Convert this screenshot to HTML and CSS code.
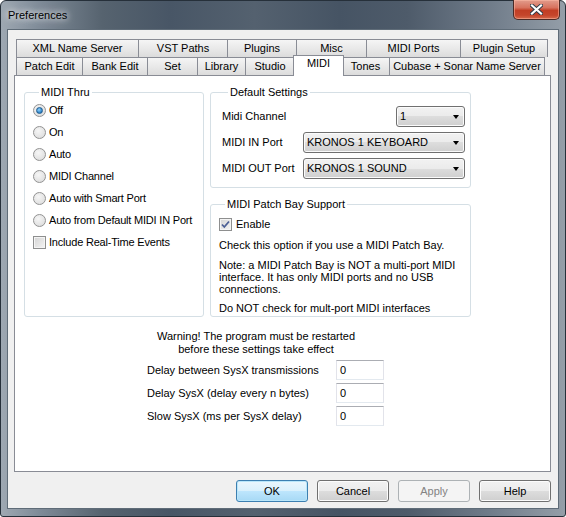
FILE: index.html
```html
<!DOCTYPE html>
<html lang="en">
<head>
    <meta charset="UTF-8">
    <meta name="viewport" content="width=device-width, initial-scale=1.0">
    <title>Preferences</title>
    <link rel="stylesheet" href="styles.css">
</head>
<body>
    <div class="window">
        <div class="titlebar">
            <span class="title">Preferences</span>
            <button class="close-btn">
                <svg width="13" height="11" viewBox="0 0 13 11">
                    <path d="M2 1.5 L11 9.5 M11 1.5 L2 9.5" stroke="#2d3a46" stroke-width="4" stroke-linecap="square"/>
                    <path d="M2 1.5 L11 9.5 M11 1.5 L2 9.5" stroke="#ffffff" stroke-width="2.2" stroke-linecap="square"/>
                </svg>
            </button>
        </div>

        <div class="client">
            <div class="tabs">
                <div class="tab-row row-top">
                    <div class="tab">XML Name Server</div>
                    <div class="tab">VST Paths</div>
                    <div class="tab">Plugins</div>
                    <div class="tab">Misc</div>
                    <div class="tab">MIDI Ports</div>
                    <div class="tab">Plugin Setup</div>
                </div>
                <div class="tab-row row-bottom">
                    <div class="tab">Patch Edit</div>
                    <div class="tab">Bank Edit</div>
                    <div class="tab">Set</div>
                    <div class="tab">Library</div>
                    <div class="tab">Studio</div>
                    <div class="tab active">MIDI</div>
                    <div class="tab">Tones</div>
                    <div class="tab">Cubase + Sonar Name Server</div>
                </div>
            </div>

            <div class="page">
                <div class="groups">
                    <fieldset class="group thru">
                        <legend>MIDI Thru</legend>
                        <div class="option"><span class="radio on"></span>Off</div>
                        <div class="option"><span class="radio"></span>On</div>
                        <div class="option"><span class="radio"></span>Auto</div>
                        <div class="option"><span class="radio"></span>MIDI Channel</div>
                        <div class="option"><span class="radio"></span>Auto with Smart Port</div>
                        <div class="option"><span class="radio"></span>Auto from Default MIDI IN Port</div>
                        <div class="option"><span class="check"></span>Include Real-Time Events</div>
                    </fieldset>

                    <div class="right-col">
                        <fieldset class="group defaults">
                            <legend>Default Settings</legend>
                            <div class="setting">
                                <span>Midi Channel</span>
                                <div class="combo small"><span>1</span><i class="arrow"></i></div>
                            </div>
                            <div class="setting">
                                <span>MIDI IN Port</span>
                                <div class="combo"><span>KRONOS 1 KEYBOARD</span><i class="arrow"></i></div>
                            </div>
                            <div class="setting">
                                <span>MIDI OUT Port</span>
                                <div class="combo"><span>KRONOS 1 SOUND</span><i class="arrow"></i></div>
                            </div>
                        </fieldset>

                        <fieldset class="group patchbay">
                            <legend>MIDI Patch Bay Support</legend>
                            <div class="check-row">
                                <span class="check">
                                    <svg width="11" height="11" viewBox="0 0 11 11">
                                        <path d="M2 5.5 L4.3 8 L9 2.5" fill="none" stroke="#4b5f95" stroke-width="1.8"/>
                                    </svg>
                                </span>Enable
                            </div>
                            <p class="hint">Check this option if you use a MIDI Patch Bay.</p>
                            <p class="note">Note: a MIDI Patch Bay is NOT a multi-port MIDI<br>interface. It has only MIDI ports and no USB<br>connections.</p>
                            <p class="hint last">Do NOT check for mult-port MIDI interfaces</p>
                        </fieldset>
                    </div>
                </div>

                <div class="sysx">
                    <p class="warning">Warning! The program must be restarted<br>before these settings take effect</p>
                    <div class="field-row">
                        <span>Delay between SysX transmissions</span>
                        <span class="textbox">0</span>
                    </div>
                    <div class="field-row">
                        <span>Delay SysX (delay every n bytes)</span>
                        <span class="textbox">0</span>
                    </div>
                    <div class="field-row">
                        <span>Slow SysX (ms per SysX delay)</span>
                        <span class="textbox">0</span>
                    </div>
                </div>
            </div>

            <div class="buttons">
                <button class="btn default">OK</button>
                <button class="btn">Cancel</button>
                <button class="btn" disabled>Apply</button>
                <button class="btn">Help</button>
            </div>
        </div>
    </div>
</body>
</html>
```

FILE: styles.css
```css
body {
    margin: 0;
    font-family: "Liberation Sans", Arial, sans-serif;
    font-size: 11px;
    line-height: 13px;
    color: #000000;
    overflow: hidden;
}

.window {
    width: 566px;
    height: 517px;
    box-sizing: border-box;
    border: 1px solid #26303a;
    border-radius: 6px 6px 3px 3px;
    background: linear-gradient(to right, #9ea8b2 0%, #7e8a97 7%, #56636f 18%, #485666 30%, #54616f 45%, #465464 60%, #4e5b6a 72%, #6e7a88 86%, #949ea8 100%);
    display: flex;
    flex-direction: column;
}

.titlebar {
    height: 28px;
    display: flex;
    align-items: center;
    justify-content: space-between;
    padding: 0 5px 0 7px;
    flex-shrink: 0;
}

.title {
    color: #000000;
    text-shadow: 0 0 6px #ffffff, 0 0 10px rgba(255, 255, 255, 0.8);
}

.close-btn {
    align-self: flex-start;
    margin-top: -1px;
    width: 47px;
    height: 20px;
    padding: 0;
    border: 1px solid #4a2a26;
    border-top: none;
    border-radius: 0 0 5px 5px;
    background: linear-gradient(#e29c8c 0%, #d7735f 40%, #c13e25 55%, #c5452b 80%, #d46a4c 100%);
    box-shadow: inset 0 0 0 1px rgba(255, 190, 170, 0.5);
    display: flex;
    justify-content: center;
    align-items: center;
}

.client {
    flex: 1;
    margin: 0 6px 7px 6px;
    border: 1px solid #5f6c78;
    background-color: #f0f0f0;
    display: flex;
    flex-direction: column;
    padding: 9px 7px 6px 6px;
    min-height: 0;
}

/* tab strip */

.tabs {
    padding-left: 2px;
}

.tab-row {
    display: grid;
    height: 18px;
}

.row-top {
    grid-template-columns: 123px 89px 69px 70px 94px 87px;
}

.row-bottom {
    grid-template-columns: 67px 65px 50px 48px 49px 47px 48px 155px;
}

.tab {
    border: 1px solid #898c95;
    border-bottom: none;
    border-left-width: 0;
    background: linear-gradient(#f5f5f5, #e9e9e9 50%, #dcdcdc);
    display: flex;
    align-items: center;
    justify-content: center;
    white-space: nowrap;
}

.tab:first-child {
    border-left-width: 1px;
}

.tab.active {
    position: relative;
    z-index: 2;
    margin: -2px -2px -1px -2px;
    border-left-width: 1px;
    background: #ffffff;
    align-items: flex-start;
    padding-top: 1px;
}

.page {
    flex: 1;
    border: 1px solid #898c95;
    background-color: #ffffff;
    margin-bottom: 8px;
    padding: 10px 0 0 9px;
}

.groups {
    display: grid;
    grid-template-columns: 180px 261px;
    column-gap: 6px;
}

.right-col {
    display: flex;
    flex-direction: column;
    gap: 10px;
}

.group {
    margin: 0;
    padding: 0;
    border: 1px solid #d5dfe5;
    border-radius: 3px;
    min-inline-size: 0;
}

.group legend {
    margin-left: 6px;
    padding: 0 2px;
    line-height: 13px;
}

/* MIDI Thru */

.thru {
    padding: 0 8px;
}

.option {
    height: 22px;
    display: flex;
    align-items: center;
    gap: 3px;
    white-space: nowrap;
    letter-spacing: -0.2px;
}

.radio {
    width: 13px;
    height: 13px;
    box-sizing: border-box;
    border: 1px solid #929292;
    border-radius: 50%;
    background: radial-gradient(circle at 40% 35%, #f6f6f6, #d8d8d8);
    display: flex;
    justify-content: center;
    align-items: center;
    flex-shrink: 0;
}

.radio.on::after {
    content: "";
    width: 5px;
    height: 5px;
    border-radius: 50%;
    border: 1px solid #1f5b8e;
    background: radial-gradient(circle at 40% 35%, #8fd3ff, #2a7fc4 70%);
}

.check {
    width: 13px;
    height: 13px;
    box-sizing: border-box;
    border: 1px solid #8e8f8f;
    background: linear-gradient(135deg, #d4d4d4, #f4f4f4);
    box-shadow: inset 0 0 0 1px #f4f4f4;
    display: flex;
    justify-content: center;
    align-items: center;
    flex-shrink: 0;
}

/* Default Settings */

.defaults {
    padding: 7px 5px 8px 11px;
}

.setting {
    height: 21px;
    display: flex;
    align-items: center;
    justify-content: space-between;
}

.setting + .setting {
    margin-top: 5px;
}

.combo {
    width: 162px;
    height: 21px;
    box-sizing: border-box;
    border: 1px solid #707070;
    border-radius: 3px;
    background: linear-gradient(#f2f2f2 0%, #ebebeb 50%, #dddddd 50%, #cfcfcf 100%);
    box-shadow: inset 0 0 0 1px #fbfbfb;
    display: flex;
    align-items: center;
    justify-content: space-between;
    padding: 0 5px 0 3px;
}

.combo.small {
    width: 69px;
}

.arrow {
    width: 0;
    height: 0;
    border-left: 3.5px solid transparent;
    border-right: 3.5px solid transparent;
    border-top: 4px solid #000000;
}

/* MIDI Patch Bay */

.patchbay {
    padding: 4px 6px 1px 8px;
}

.check-row {
    height: 18px;
    display: flex;
    align-items: center;
    gap: 4px;
}

.patchbay p {
    margin: 0;
}

.patchbay .hint {
    margin-top: 6px;
}

.patchbay .note {
    margin-top: 7px;
    line-height: 12px;
}

.patchbay .hint.last {
    margin-top: 7px;
}

/* SysX timing */

.sysx {
    width: 237px;
    margin: 13px 0 0 123px;
}

.warning {
    margin: 0 0 4px 0;
    padding-right: 19px;
    text-align: center;
}

.field-row {
    height: 20px;
    display: flex;
    align-items: center;
    justify-content: space-between;
}

.field-row + .field-row {
    margin-top: 3px;
}

.textbox {
    width: 48px;
    height: 20px;
    box-sizing: border-box;
    border: 1px solid #e2e3ea;
    border-top-color: #abadb3;
    border-bottom-color: #e3e9ef;
    background: #ffffff;
    padding-left: 3px;
    display: flex;
    align-items: center;
}

/* dialog buttons */

.buttons {
    display: flex;
    justify-content: flex-end;
    gap: 9px;
}

.btn {
    width: 72px;
    height: 22px;
    padding: 0;
    font-family: inherit;
    font-size: 11px;
    color: #000000;
    border: 1px solid #707070;
    border-radius: 3px;
    background: linear-gradient(#f2f2f2 0%, #ebebeb 50%, #dddddd 50%, #cfcfcf 100%);
    box-shadow: inset 0 0 0 1px #fcfcfc;
}

.btn.default {
    border-color: #3c7fb1;
    background: linear-gradient(#eaf6fd 0%, #d9f0fc 50%, #bee6fd 50%, #a7d9f5 100%);
    box-shadow: inset 0 0 0 1px #b9e6fa;
}

.btn:disabled {
    color: #838383;
    border-color: #adb2b5;
    background: #f4f4f4;
    box-shadow: none;
}
```
